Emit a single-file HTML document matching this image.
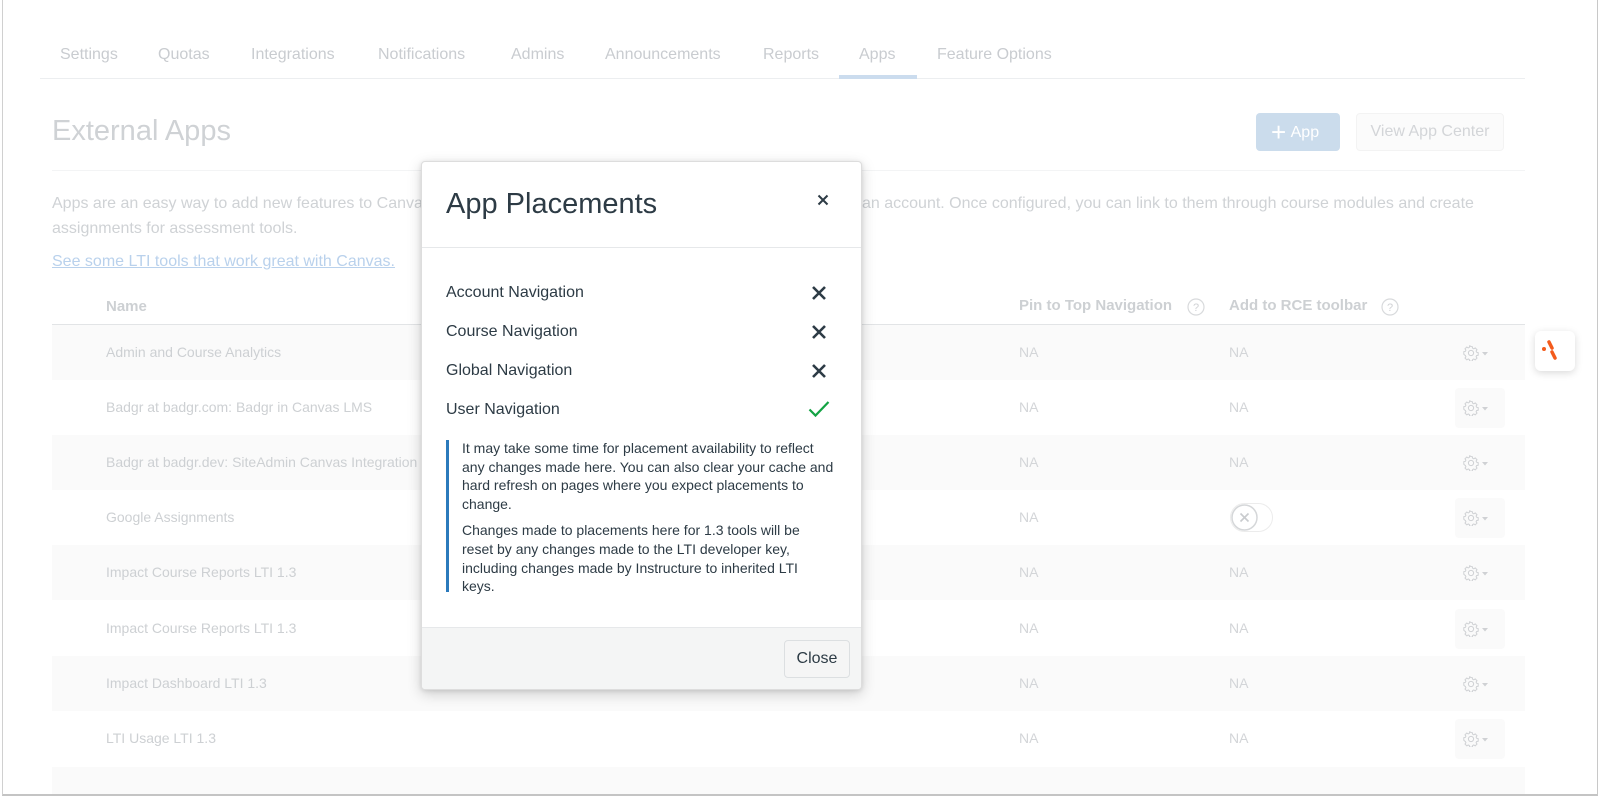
<!DOCTYPE html>
<html style="overflow:hidden;width:1600px;height:796px"><head><meta charset="utf-8">
<style>
*{box-sizing:border-box;margin:0;padding:0}
body{width:1600px;height:796px;background:#fff;font-family:"Liberation Sans",sans-serif;position:relative;overflow:hidden}
.frame{position:absolute;left:2px;top:0;width:1596px;height:796px;border-left:1px solid #d0d0d0;border-right:1px solid #c8c8c8;border-bottom:2px solid #c4c4c4;z-index:5}
.a{position:absolute;white-space:nowrap}
.tab{position:absolute;top:46px;font-size:16px;color:#c9ccd0}
.row{position:absolute;left:52px;width:1473px;height:55px}
.row.s{background:#fafafa}
.nm{position:absolute;left:54px;top:19px;font-size:14px;color:#cdd0d3}
.na{position:absolute;top:19px;font-size:14px;color:#d3d5d8}
.gear{position:absolute;left:1403px;top:8px;width:50px;height:40px;background:#fafafa;border-radius:4px}
.modal{position:absolute;left:421px;top:161px;width:441px;height:529px;background:#fff;border:1px solid #ddd;border-radius:4px;box-shadow:0 4px 14px rgba(0,0,0,.18),0 1px 4px rgba(0,0,0,.1);overflow:hidden;z-index:3}
.it{position:absolute;left:24px;font-size:16px;color:#2d3b45}
.x{position:absolute;left:389px;width:16px;height:16px}
</style></head><body>
<div class="frame"></div>
<div class="tab" style="left:60px">Settings</div>
<div class="tab" style="left:158px">Quotas</div>
<div class="tab" style="left:251px">Integrations</div>
<div class="tab" style="left:378px">Notifications</div>
<div class="tab" style="left:511px">Admins</div>
<div class="tab" style="left:605px">Announcements</div>
<div class="tab" style="left:763px">Reports</div>
<div class="tab" style="left:859px">Apps</div>
<div class="tab" style="left:937px">Feature Options</div>
<div class="a" style="left:40px;top:78px;width:1485px;height:1px;background:#eceef0"></div>
<div class="a" style="left:839px;top:75px;width:78px;height:4px;background:#cbdcee"></div>

<div class="a" style="left:52px;top:115px;font-size:29px;color:#cfd2d5">External Apps</div>
<div class="a" style="left:52px;top:170px;width:1473px;height:1px;background:#f3f4f5"></div>
<div class="a" style="left:1256px;top:113px;width:84px;height:38px;background:#cbdcec;border-radius:4px;color:#fff;font-size:16px;line-height:38px;padding-left:15px"><span style="font-size:26px;vertical-align:-4px;font-weight:100">+</span>&nbsp;App</div>
<div class="a" style="left:1356px;top:113px;width:148px;height:38px;background:#fbfbfb;border:1px solid #f3f3f3;border-radius:4px;color:#d3d5d8;font-size:16px;line-height:36px;text-align:center">View App Center</div>
<div class="a" style="left:52px;top:191px;font-size:16px;color:#cfd2d5;line-height:25px">Apps are an easy way to add new features to Canva</div>
<div class="a" style="left:862px;top:191px;font-size:16px;color:#cfd2d5;line-height:25px">an account. Once configured, you can link to them through course modules and create</div>
<div class="a" style="left:52px;top:216px;font-size:16px;color:#cfd2d5;line-height:25px">assignments for assessment tools.</div>
<div class="a" style="left:52px;top:253px;font-size:16px;color:#b9d1ec;text-decoration:underline">See some LTI tools that work great with Canvas.</div>

<div class="a" style="left:106px;top:298px;font-size:15px;font-weight:bold;color:#cdd0d3">Name</div>
<div class="a" style="left:1019px;top:297px;font-size:15px;font-weight:bold;color:#cdd0d3">Pin to Top Navigation</div>
<div class="a" style="left:1229px;top:297px;font-size:15px;font-weight:bold;color:#cdd0d3">Add to RCE toolbar</div>
<svg class="a" style="left:1187px;top:298px" width="18" height="18"><circle cx="9" cy="9" r="8" fill="none" stroke="#d8dadc" stroke-width="1.2"/><text x="9" y="13" font-size="11" text-anchor="middle" fill="#d0d2d5" font-family="Liberation Sans">?</text></svg>
<svg class="a" style="left:1381px;top:298px" width="18" height="18"><circle cx="9" cy="9" r="8" fill="none" stroke="#d8dadc" stroke-width="1.2"/><text x="9" y="13" font-size="11" text-anchor="middle" fill="#d0d2d5" font-family="Liberation Sans">?</text></svg>
<div class="a" style="left:52px;top:324px;width:1473px;height:1px;background:#e2e4e6"></div>

<div class="row s" style="top:325px"><div class="nm">Admin and Course Analytics</div><div class="na" style="left:967px">NA</div><div class="na" style="left:1177px">NA</div><div class="gear"></div></div>
<div class="row" style="top:380px"><div class="nm">Badgr at badgr.com: Badgr in Canvas LMS</div><div class="na" style="left:967px">NA</div><div class="na" style="left:1177px">NA</div><div class="gear"></div></div>
<div class="row s" style="top:435px"><div class="nm">Badgr at badgr.dev: SiteAdmin Canvas Integration</div><div class="na" style="left:967px">NA</div><div class="na" style="left:1177px">NA</div><div class="gear"></div></div>
<div class="row" style="top:490px"><div class="nm">Google Assignments</div><div class="na" style="left:967px">NA</div><div class="gear"></div>
<div class="a" style="left:1178px;top:13px;width:43px;height:29px;border:1px solid #ececec;border-radius:15px;background:#fff"></div>
<svg class="a" style="left:1178px;top:13px" width="29" height="29"><circle cx="14.5" cy="14.5" r="12.5" fill="#fff" stroke="#d5d7d9" stroke-width="1.5"/><path d="M10.5 10.5l8 8M18.5 10.5l-8 8" stroke="#c9cbce" stroke-width="1.6"/></svg></div>
<div class="row s" style="top:545px"><div class="nm">Impact Course Reports LTI 1.3</div><div class="na" style="left:967px">NA</div><div class="na" style="left:1177px">NA</div><div class="gear"></div></div>
<div class="row" style="top:601px"><div class="nm">Impact Course Reports LTI 1.3</div><div class="na" style="left:967px">NA</div><div class="na" style="left:1177px">NA</div><div class="gear"></div></div>
<div class="row s" style="top:656px"><div class="nm">Impact Dashboard LTI 1.3</div><div class="na" style="left:967px">NA</div><div class="na" style="left:1177px">NA</div><div class="gear"></div></div>
<div class="row" style="top:711px"><div class="nm">LTI Usage LTI 1.3</div><div class="na" style="left:967px">NA</div><div class="na" style="left:1177px">NA</div><div class="gear"></div></div>
<div class="row s" style="top:767px;height:27px"></div>

<svg width="0" height="0" style="position:absolute"><defs><g id="g"><path d="M8 1.5l1.3.2.4 1.6 1.1.5 1.4-.9 1.8 1.8-.9 1.4.5 1.1 1.6.4v2.6l-1.6.4-.5 1.1.9 1.4-1.8 1.8-1.4-.9-1.1.5-.4 1.6H6.7l-.4-1.6-1.1-.5-1.4.9-1.8-1.8.9-1.4-.5-1.1L.8 9.3V6.7l1.6-.4.5-1.1-.9-1.4 1.8-1.8 1.4.9 1.1-.5.4-1.6z" fill="none" stroke="#cfd1d4" stroke-width="1"/><circle cx="8" cy="8" r="2.6" fill="none" stroke="#cfd1d4" stroke-width="1"/><path d="M19 7h6l-3 3.5z" fill="#cfd1d4"/></g></defs></svg>
<svg class="a" style="left:1463px;top:345px" width="28" height="16"><use href="#g"/></svg>
<svg class="a" style="left:1463px;top:400px" width="28" height="16"><use href="#g"/></svg>
<svg class="a" style="left:1463px;top:455px" width="28" height="16"><use href="#g"/></svg>
<svg class="a" style="left:1463px;top:510px" width="28" height="16"><use href="#g"/></svg>
<svg class="a" style="left:1463px;top:565px" width="28" height="16"><use href="#g"/></svg>
<svg class="a" style="left:1463px;top:621px" width="28" height="16"><use href="#g"/></svg>
<svg class="a" style="left:1463px;top:676px" width="28" height="16"><use href="#g"/></svg>
<svg class="a" style="left:1463px;top:731px" width="28" height="16"><use href="#g"/></svg>

<div class="a" style="left:1535px;top:331px;width:40px;height:40px;background:#fff;border-radius:6px;box-shadow:0 2px 8px rgba(0,0,0,.15)"></div>
<svg class="a" style="left:1540px;top:338px" width="20" height="26"><circle cx="4" cy="11" r="2" fill="#f35b1c"/><path d="M9 4l3 6M12 14l3 6" stroke="#f35b1c" stroke-width="3.5" stroke-linecap="round"/></svg>

<div class="modal">
  <div class="a" style="left:24px;top:26px;font-size:29px;color:#2d3b45">App Placements</div>
  <svg class="a" style="left:395px;top:32px" width="12" height="12"><path d="M1.5 1.5l9 9M10.5 1.5l-9 9" stroke="#2d3b45" stroke-width="2"/></svg>
  <div class="a" style="left:0;top:85px;width:441px;height:1px;background:#e6e8ea"></div>
  <div class="it" style="top:122px">Account Navigation</div>
  <div class="it" style="top:161px">Course Navigation</div>
  <div class="it" style="top:200px">Global Navigation</div>
  <div class="it" style="top:239px">User Navigation</div>
  <svg class="x" style="top:123px"><path d="M2 2l12 12M14 2L2 14" stroke="#2d3b45" stroke-width="2.6"/></svg>
  <svg class="x" style="top:162px"><path d="M2 2l12 12M14 2L2 14" stroke="#2d3b45" stroke-width="2.6"/></svg>
  <svg class="x" style="top:201px"><path d="M2 2l12 12M14 2L2 14" stroke="#2d3b45" stroke-width="2.6"/></svg>
  <svg class="a" style="left:386px;top:238px" width="22" height="18"><path d="M1.5 9.5l6 6L20.5 2" fill="none" stroke="#13a344" stroke-width="2.2"/></svg>
  <div class="a" style="left:24px;top:278px;width:3px;height:152px;background:#2b7abc"></div>
  <div class="a" style="left:40px;top:277px;width:372px;white-space:normal;font-size:14px;line-height:18.6px;color:#2d3b45">It may take some time for placement availability to reflect any changes made here. You can also clear your cache and hard refresh on pages where you expect placements to change.<div style="height:8px"></div>Changes made to placements here for 1.3 tools will be reset by any changes made to the LTI developer key, including changes made by Instructure to inherited LTI keys.</div>
  <div class="a" style="left:0;top:465px;width:441px;height:64px;background:#f4f5f5;border-top:1px solid #e6e8ea"></div>
  <div class="a" style="left:362px;top:478px;width:66px;height:38px;background:#f5f5f5;border:1px solid #dcdfe1;border-radius:4px;font-size:16px;color:#2d3b45;text-align:center;line-height:36px">Close</div>
</div>
</body></html>
